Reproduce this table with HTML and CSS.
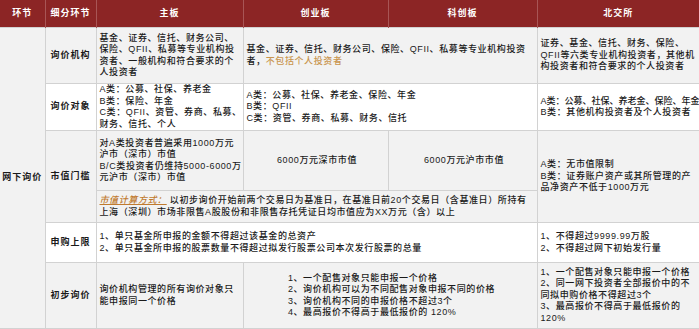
FILE: index.html
```html
<!DOCTYPE html>
<html lang="zh">
<head>
<meta charset="utf-8">
<link rel="stylesheet" href="styles.css">
</head>
<body>
<table class="cmp">
  <colgroup>
    <col class="c1"><col class="c2"><col class="c3"><col class="c4"><col class="c5"><col class="c6">
  </colgroup>
  <thead>
    <tr class="r-head">
      <th>环节</th><th>细分环节</th><th>主板</th><th>创业板</th><th>科创板</th><th>北交所</th>
    </tr>
  </thead>
  <tbody>
    <tr class="r1 gray">
      <td class="lbl stage" rowspan="6">网下询价</td>
      <td class="lbl">询价机构</td>
      <td>基金、证券、信托、财务公司、<br>保险、QFII、私募等专业机构投<br>资者、一般机构和符合要求的个<br>人投资者</td>
      <td colspan="2">基金、证券、信托、财务公司、保险、QFII、私募等专业机构投资<br>者，<span class="hl">不包括个人投资者</span></td>
      <td>证券、基金、信托、财务、保险、<br>QFII等六类专业机构投资者，其他机<br>构投资者和符合要求的个人投资者</td>
    </tr>
    <tr class="r2">
      <td class="lbl">询价对象</td>
      <td>A类：公募、社保、养老金<br>B类：保险、年金<br>C类：QFII、资管、券商、私募、<br>财务、信托、个人</td>
      <td colspan="2">A类：公募、社保、养老金、保险、年金<br>B类：QFII<br>C类：资管、券商、私募、财务、信托</td>
      <td><span class="tight">A类：公募、社保、养老金、保险、年金</span><br>B类：其他机构投资者及个人投资者</td>
    </tr>
    <tr class="r3 gray">
      <td class="lbl" rowspan="2">市值门槛</td>
      <td>对A类投资者普遍采用1000万元<br>沪市（深市）市值<br>B/C类投资者仍维持5000-6000万<br>元沪市（深市）市值</td>
      <td class="center">6000万元深市市值</td>
      <td class="center">6000万元沪市市值</td>
      <td rowspan="2">A类：无市值限制<br>B类：证券账户资产或其所管理的产<br>品净资产不低于1000万元</td>
    </tr>
    <tr class="r3b gray">
      <td colspan="3"><span class="calc">市值计算方式：</span> 以初步询价开始前两个交易日为基准日，在基准日前20个交易日（含基准日）所持有<br>上海（深圳）市场非限售A股股份和非限售存托凭证日均市值应为XX万元（含）以上</td>
    </tr>
    <tr class="r4">
      <td class="lbl">申购上限</td>
      <td colspan="3">1、单只基金所申报的金额不得超过该基金的总资产<br>2、单只基金所申报的股票数量不得超过拟发行股票公司本次发行股票的总量</td>
      <td>1、不得超过9999.99万股<br>2、不得超过网下初始发行量</td>
    </tr>
    <tr class="r5 gray">
      <td class="lbl">初步询价</td>
      <td>询价机构管理的所有询价对象只<br>能申报同一个价格</td>
      <td colspan="2" class="center"><div class="block">1、一个配售对象只能申报一个价格<br>2、询价机构可以为不同配售对象申报不同的价格<br>3、询价机构不同的申报价格不超过3个<br>4、最高报价不得高于最低报价的 120%</div></td>
      <td>1、一个配售对象只能申报一个价格<br>2、同一网下投资者全部报价中的不<br>同拟申购价格不得超过3个<br>3、最高报价不得高于最低报价的<br>120%</td>
    </tr>
  </tbody>
</table>
</body>
</html>
```

FILE: styles.css
```css
html, body {
  margin: 0;
  padding: 0;
  background: #ffffff;
}
body {
  font-family: "Liberation Sans", "Noto Sans CJK SC", sans-serif;
  color: #1a1a1a;
}
.cmp {
  width: 699px;
  table-layout: fixed;
  border-collapse: collapse;
  font-size: 9px;
  font-weight: 500;
  letter-spacing: 0.6px;
  line-height: 11.5px;
}
.c1 { width: 45px; }
.c2 { width: 51px; }
.c3 { width: 147px; }
.c4 { width: 145px; }
.c5 { width: 149px; }
.c6 { width: 162px; }

.cmp th {
  background: #8c2525;
  color: #ffffff;
  font-weight: 700;
  letter-spacing: 1px;
  height: 27px;
  padding: 0;
  text-align: center;
  vertical-align: middle;
  border-left: 1px solid #a85555;
  border-right: 1px solid #a85555;
}
.cmp th:first-child { border-left: none; }
.cmp th:last-child { border-right: none; }

.cmp td {
  border: 1px solid #d2d2d2;
  padding: 0 0 0 3px;
  vertical-align: middle;
  text-align: left;
  white-space: nowrap;
  overflow: hidden;
}
.cmp td:first-child { border-left: none; }
.cmp tr td:last-child { border-right: none; }

.gray td { background: #f2f2f2; }
.stage { background: #f2f2f2; }
.lbl {
  font-weight: 700;
  letter-spacing: 1px;
  text-align: center !important;
  padding: 0 !important;
}
.center { text-align: center !important; }
.block {
  display: inline-block;
  text-align: left;
}
.tight { letter-spacing: 0; }
.hl { color: #c9954e; }
.calc {
  color: #c07a2e;
  font-style: italic;
  text-decoration: underline;
}

.r1 td { height: 55px; }
.r2 td { height: 46px; }
.r3 td { height: 59px; }
.r3b td { height: 31px; }
.r4 td { height: 39px; }
.r5 td { height: 65px; }
.r3 td[rowspan="2"], .r1 td[rowspan="6"] { height: auto; }
```
